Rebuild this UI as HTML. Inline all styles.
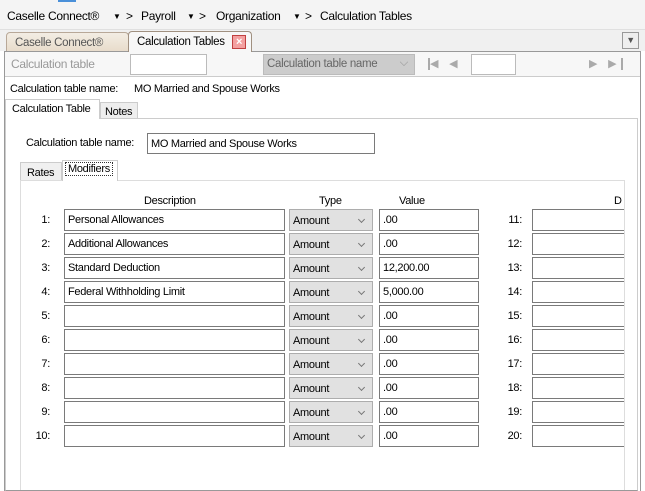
<!DOCTYPE html>
<html><head><meta charset="utf-8"><style>
*{box-sizing:border-box;margin:0;padding:0}
body{width:645px;height:491px;overflow:hidden;background:#fff;font-family:"Liberation Sans",sans-serif;font-size:11px;letter-spacing:-0.3px;color:#000;position:relative}
.a{position:absolute;white-space:nowrap}
.in{position:absolute;border:1px solid #7a7a7a;background:#fff;height:22px;padding:0 3px;line-height:20px;font-size:11px;white-space:nowrap;overflow:hidden}
.sel{position:absolute;border:1px solid #adadad;background:#e1e1e1;height:22px;padding:0 3px;line-height:22px;font-size:11px}
.sel:after{content:"";position:absolute;right:8px;top:7px;width:4px;height:4px;border-right:1px solid #777;border-bottom:1px solid #777;transform:rotate(45deg)}
.lb{position:absolute;font-size:11px;text-align:right}
.bc{position:absolute;top:9px;font-size:12px;white-space:nowrap}
.ar{position:absolute;top:12px;font-size:8px}
</style></head><body>
<div class="a" style="left:0;top:0;width:645px;height:30px;background:#f4f4f4;border-bottom:1px solid #e0e0e0"></div>
<div class="a" style="left:58px;top:0;width:18px;height:2px;background:#4a90d9"></div>
<div class="bc" style="left:7px">Caselle Connect®</div>
<div class="ar" style="left:113px">▼</div><div class="bc" style="left:126px">&gt;</div>
<div class="bc" style="left:141px">Payroll</div>
<div class="ar" style="left:187px">▼</div><div class="bc" style="left:199px">&gt;</div>
<div class="bc" style="left:216px">Organization</div>
<div class="ar" style="left:293px">▼</div><div class="bc" style="left:305px">&gt;</div>
<div class="bc" style="left:320px">Calculation Tables</div>
<div class="a" style="left:0;top:30px;width:645px;height:21px;background:#f0f0f0"></div>
<div class="a" style="left:6px;top:32px;width:123px;height:19px;border:1px solid #b8a898;border-bottom:none;border-radius:4px 4px 0 0;background:linear-gradient(#f3ede4,#e8dccb);color:#555;font-size:11.5px;padding:4px 0 0 8px">Caselle Connect®</div>
<div class="a" style="left:128px;top:31px;width:124px;height:21px;border:1px solid #a09080;border-bottom:none;border-radius:4px 4px 0 0;background:#f7f7f7;font-size:11.5px;padding:4px 0 0 8px;z-index:3">Calculation Tables</div>
<div class="a" style="left:232px;top:35px;width:14px;height:14px;background:#f3a0a0;border:1px solid #c04040;color:#fff;font-size:11px;font-weight:bold;text-align:center;line-height:12px;z-index:4">×</div>
<div class="a" style="left:622px;top:32px;width:17px;height:17px;border:1px solid #999;background:#eee;color:#555;font-size:9px;text-align:center;line-height:15px">▼</div>
<div class="a" style="left:4px;top:51px;width:637px;height:440px;border:1px solid #999;border-bottom:none;background:#fff"></div>
<div class="a" style="left:5px;top:52px;width:635px;height:25px;background:#f7f7f7;border-bottom:1px solid #ccc"></div>
<div class="a" style="left:11px;top:57px;color:#999;font-size:12px">Calculation table</div>
<div class="in" style="left:130px;top:54px;width:77px;height:21px;border-color:#bbb"></div>
<div class="a" style="left:263px;top:54px;width:152px;height:21px;background:#ccc;border:1px solid #bbb;color:#666;font-size:11.5px;padding:3px 3px;overflow:hidden">Calculation table name<span style="position:absolute;right:6px;top:2px;color:#999">⌵</span></div>
<div class="a" style="left:428px;top:58px;width:2px;height:12px;background:#aaa"></div>
<div class="a" style="left:430px;top:57px;color:#aaa;font-size:11px">◀&nbsp;&nbsp;&nbsp;&nbsp;◀</div>
<div class="in" style="left:471px;top:54px;width:45px;height:21px;border-color:#bbb"></div>
<div class="a" style="left:589px;top:57px;color:#aaa;font-size:11px">▶&nbsp;&nbsp;&nbsp;&nbsp;▶</div>
<div class="a" style="left:621px;top:58px;width:2px;height:12px;background:#aaa"></div>
<div class="a" style="left:10px;top:83px">Calculation table name:</div>
<div class="a" style="left:134px;top:83px">MO Married and Spouse Works</div>
<div class="a" style="left:5px;top:99px;width:95px;height:20px;border:1px solid #ccc;border-bottom:none;background:#fff;padding:3px 0 0 6px;z-index:2">Calculation Table</div>
<div class="a" style="left:100px;top:102px;width:38px;height:17px;border:1px solid #ccc;background:#eee;padding:3px 0 0 4px">Notes</div>
<div class="a" style="left:5px;top:118px;width:633px;height:373px;border:1px solid #ccc;border-bottom:1px solid #999"></div>
<div class="a" style="left:26px;top:137px">Calculation table name:</div>
<div class="in" style="left:147px;top:133px;width:228px;height:21px">MO Married and Spouse Works</div>
<div class="a" style="left:20px;top:162px;width:42px;height:18px;border:1px solid #ccc;border-bottom:none;background:#f0f0f0;padding:4px 0 0 6px">Rates</div>
<div class="a" style="left:62px;top:160px;width:56px;height:21px;border:1px solid #ccc;border-bottom:none;background:#fff;z-index:2;padding:2px 2px"><span style="border:1px dotted #333;padding:0 2px">Modifiers</span></div>
<div class="a" style="left:20px;top:180px;width:607px;height:310px;border:1px solid #ddd;border-bottom:none"></div>
<div class="a" style="left:144px;top:195px">Description</div>
<div class="a" style="left:319px;top:195px">Type</div>
<div class="a" style="left:399px;top:195px">Value</div>
<div class="a" style="left:614px;top:195px">D</div>
<div id="rows"></div>
<script>
var d=["Personal Allowances","Additional Allowances","Standard Deduction","Federal Withholding Limit","","","","","",""];
var v=[".00",".00","12,200.00","5,000.00",".00",".00",".00",".00",".00",".00"];
var h="";
for(var i=0;i<10;i++){var y=209+i*24;
h+='<div class="lb" style="left:20px;width:30px;top:'+(y+5)+'px">'+(i+1)+':</div>';
h+='<div class="in" style="left:64px;top:'+y+'px;width:221px">'+d[i]+'</div>';
h+='<div class="sel" style="left:289px;top:'+y+'px;width:84px">Amount</div>';
h+='<div class="in" style="left:379px;top:'+y+'px;width:100px">'+v[i]+'</div>';
h+='<div class="lb" style="left:490px;width:32px;top:'+(y+5)+'px">'+(i+11)+':</div>';
h+='<div class="in" style="left:532px;top:'+y+'px;width:92px;border-right:none"></div>';}
document.getElementById("rows").innerHTML=h;
</script>
<div class="a" style="left:624px;top:180px;width:13px;height:310px;background:#fff;border-left:1px solid #ddd"></div>
</body></html>
